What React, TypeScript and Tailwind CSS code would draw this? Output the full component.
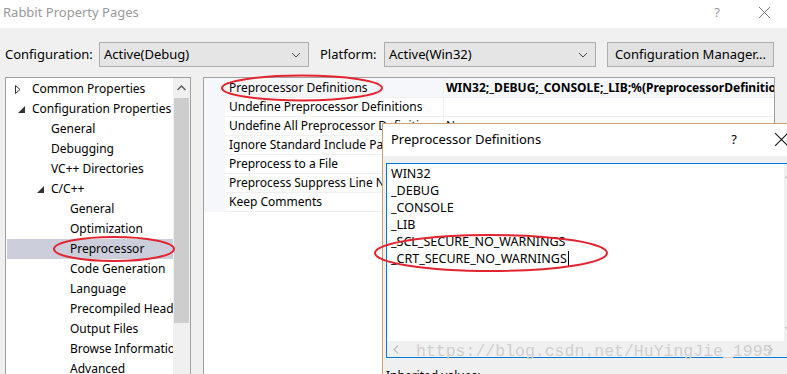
import React from 'react';

const treeItems: { label: string; level: number; arrow?: 'open' | 'closed'; selected?: boolean }[] = [
  { label: 'Common Properties', level: 0, arrow: 'closed' },
  { label: 'Configuration Properties', level: 0, arrow: 'open' },
  { label: 'General', level: 1 },
  { label: 'Debugging', level: 1 },
  { label: 'VC++ Directories', level: 1 },
  { label: 'C/C++', level: 1, arrow: 'open' },
  { label: 'General', level: 2 },
  { label: 'Optimization', level: 2 },
  { label: 'Preprocessor', level: 2, selected: true },
  { label: 'Code Generation', level: 2 },
  { label: 'Language', level: 2 },
  { label: 'Precompiled Headers', level: 2 },
  { label: 'Output Files', level: 2 },
  { label: 'Browse Information', level: 2 },
  { label: 'Advanced', level: 2 },
];

const indent = ['pl-[8px]', 'pl-[27px]', 'pl-[46px]'];

const props = [
  { name: 'Preprocessor Definitions', value: 'WIN32;_DEBUG;_CONSOLE;_LIB;%(PreprocessorDefinitions)', bold: true },
  { name: 'Undefine Preprocessor Definitions', value: '' },
  { name: 'Undefine All Preprocessor Definitions', value: 'No' },
  { name: 'Ignore Standard Include Paths', value: 'No' },
  { name: 'Preprocess to a File', value: 'No' },
  { name: 'Preprocess Suppress Line Numbers', value: 'No' },
  { name: 'Keep Comments', value: 'No' },
];

const defs = ['WIN32', '_DEBUG', '_CONSOLE', '_LIB', '_SCL_SECURE_NO_WARNINGS', '_CRT_SECURE_NO_WARNINGS'];

function Chevron() {
  return (
    <svg width="10" height="6" viewBox="0 0 10 6" className="shrink-0">
      <path d="M1 1 L5 5 L9 1" fill="none" stroke="#444" strokeWidth="1" />
    </svg>
  );
}

function CloseGlyph({ size = 14 }: { size?: number }) {
  return (
    <svg width={size} height={size} viewBox="0 0 14 14">
      <path d="M1 1 L13 13 M13 1 L1 13" stroke="#111" strokeWidth="1" />
    </svg>
  );
}

function Select({ value, className }: { value: string; className: string }) {
  return (
    <div className={`h-[25px] flex items-center justify-between pl-[4px] pr-[7px] bg-[#e5e5e5] border border-[#adadad] ${className}`}>
      <span>{value}</span>
      <Chevron />
    </div>
  );
}

function TreeArrow({ kind }: { kind?: 'open' | 'closed' }) {
  if (!kind) return null;
  if (kind === 'closed')
    return (
      <svg width="6" height="9" viewBox="0 0 6 9">
        <path d="M0.5 0.5 L5 4.5 L0.5 8.5 Z" fill="none" stroke="#333" strokeWidth="1" />
      </svg>
    );
  return (
    <svg width="7" height="7" viewBox="0 0 7 7" className="ml-[3px]">
      <path d="M7 0 L7 7 L0 7 Z" fill="#333" />
    </svg>
  );
}

export default function App() {
  return (
    <div className="relative w-[787px] h-[374px] overflow-hidden bg-[#f0f0f0] font-['Noto_Sans','Open_Sans',sans-serif] text-[12px] text-black">
      {/* title bar */}
      <div className="h-[28px] bg-white flex items-center pl-[3px] pb-[3px]">
        <span className="text-[13px] text-[#999]">Rabbit Property Pages</span>
        <span className="ml-auto text-[13px] text-[#999] mr-[38px]">?</span>
        <span className="mr-[16px] opacity-60"><CloseGlyph size={13} /></span>
      </div>

      {/* configuration row */}
      <div className="flex items-center pt-[14px] pl-[5px] text-[13px]">
        <span className="w-[94px]">Configuration:</span>
        <Select value="Active(Debug)" className="w-[210px]" />
        <span className="ml-[11px] w-[64px]">Platform:</span>
        <Select value="Active(Win32)" className="w-[212px]" />
        <div className="ml-[11px] w-[167px] h-[25px] flex items-center justify-center bg-[#e1e1e1] border border-[#adadad]">
          Configuration Manager...
        </div>
      </div>

      {/* main panels */}
      <div className="flex pt-[10px] pl-[5px] h-[400px]">
        {/* tree */}
        <div className="w-[186px] shrink-0 h-full border border-[#a0a0a0] bg-white flex">
          <div className="flex-1 min-w-0 pt-[1px] pl-[1px] overflow-hidden">
            {treeItems.map((t, i) => (
              <div
                key={i}
                className={`h-[20px] flex items-center whitespace-nowrap overflow-hidden ${indent[t.level]} ${t.selected ? 'bg-[#cccedb]' : ''}`}
              >
                <span className="w-[17px] shrink-0 flex items-center">
                  <TreeArrow kind={t.arrow} />
                </span>
                <span className="shrink-0">{t.label}</span>
              </div>
            ))}
          </div>
          <div className="w-[17px] shrink-0 bg-[#f0f0f0] flex flex-col items-center">
            <div className="h-[20px] flex items-center justify-center">
              <svg width="9" height="6" viewBox="0 0 9 6">
                <path d="M0.5 5 L4.5 1 L8.5 5" fill="none" stroke="#606060" strokeWidth="1.5" />
              </svg>
            </div>
            <div className="w-[15px] h-[225px] bg-[#cdcdcd]" />
          </div>
        </div>

        {/* property grid */}
        <div className="ml-[12px] w-[572px] shrink-0 h-full border border-[#a0a0a0] bg-white flex flex-col">
          <div className="flex bg-[#f5f7fb] pt-[1px]">
            <div className="w-[21px] shrink-0" />
            <div className="flex-1 min-w-0 overflow-hidden">
              {props.map((p, i) => (
                <div
                  key={i}
                  className={`h-[19px] flex items-center whitespace-nowrap border-b border-[#f0f0f0] ${i === 0 ? 'bg-[#f5f7fb]' : 'bg-white'}`}
                >
                  <span className="w-[219px] shrink-0 pl-[4px] overflow-hidden border-r border-[#f0f0f0] h-full flex items-center">{p.name}</span>
                  <span className={`pl-[2px] shrink-0 ${p.bold ? 'font-bold' : ''}`}>{p.value}</span>
                </div>
              ))}
            </div>
          </div>
        </div>
      </div>

      {/* Preprocessor Definitions dialog */}
      <div className="absolute left-[382px] top-[123px] w-[420px] h-[260px] border border-[#c9a177] bg-[#f0f0f0] flex flex-col">
        <div className="h-[32px] shrink-0 bg-white flex items-center pl-[8px] pb-[1px]">
          <span className="text-[13px]">Preprocessor Definitions</span>
          <span className="ml-[190px] text-[13px]">?</span>
          <span className="ml-[37px]"><CloseGlyph size={15} /></span>
        </div>
        <div className="pt-[7px] pl-[3px] shrink-0">
          <div className="w-[410px] h-[195px] border border-[#0078d7] bg-white flex flex-col">
            <div className="flex flex-1 min-h-0">
              <div className="flex-1 pl-[4px] pt-[1px]">
                {defs.map((d, i) => (
                  <div key={i} className="h-[17px] leading-[17px] text-[12.5px] flex items-center">
                    <span>{d}</span>
                    {i === defs.length - 1 && <span className="ml-[1px] w-[1px] h-[15px] bg-black" />}
                  </div>
                ))}
              </div>
              <div className="w-[11px] bg-[#f0f0f0] flex flex-col items-center justify-between py-[9px]">
                <svg width="9" height="6" viewBox="0 0 9 6">
                  <path d="M0.5 5 L4.5 1 L8.5 5" fill="none" stroke="#c2c2c2" strokeWidth="1.5" />
                </svg>
                <svg width="9" height="6" viewBox="0 0 9 6">
                  <path d="M0.5 1 L4.5 5 L8.5 1" fill="none" stroke="#c2c2c2" strokeWidth="1.5" />
                </svg>
              </div>
            </div>
            <div className="h-[16px] shrink-0 bg-[#f0f0f0] flex items-center pl-[6px] pr-[22px] justify-between">
              <svg width="6" height="9" viewBox="0 0 6 9">
                <path d="M5 0.5 L1 4.5 L5 8.5" fill="none" stroke="#c2c2c2" strokeWidth="1.5" />
              </svg>
              <svg width="6" height="9" viewBox="0 0 6 9">
                <path d="M1 0.5 L5 4.5 L1 8.5" fill="none" stroke="#c2c2c2" strokeWidth="1.5" />
              </svg>
            </div>
          </div>
          <div className="pt-[9px] text-[12px]">Inherited values:</div>
        </div>
      </div>

      {/* watermark */}
      <div className="absolute left-[416px] top-[340px] font-['Liberation_Mono',monospace] text-[16.5px] text-[#cfcfcf] whitespace-nowrap">
        https://blog.csdn.net/HuYingJie_1995
      </div>

      {/* red annotation ellipses */}
      <svg className="absolute left-0 top-0 pointer-events-none" width="787" height="374">
        <ellipse cx="302" cy="88" rx="80" ry="12.5" fill="none" stroke="#e3242f" strokeWidth="2" />
        <ellipse cx="114" cy="249" rx="60" ry="12" fill="none" stroke="#e3242f" strokeWidth="2" />
        <ellipse cx="491" cy="253" rx="116" ry="18" fill="none" stroke="#e3242f" strokeWidth="2" />
      </svg>
    </div>
  );
}
